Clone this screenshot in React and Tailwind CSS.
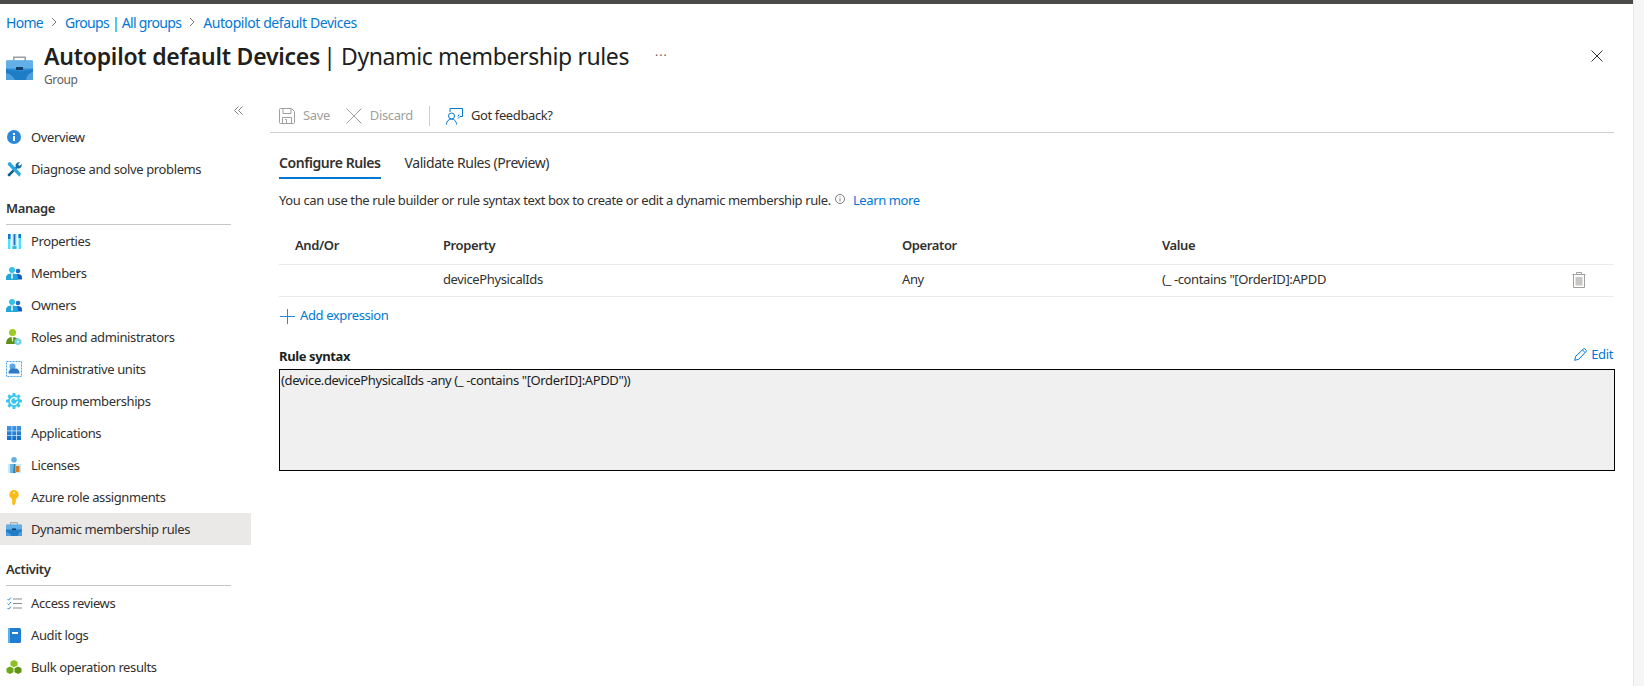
import React from 'react';

const Briefcase = ({ className }) => (
  <svg className={className} viewBox="0 0 27 24">
    <path d="M7 5V.5h13V5h-1.500V2H8.500v3z" fill="#9a9ea3" />
    <rect x="0" y="4.500" width="27" height="19.500" rx="1.500" fill="#2f8ed8" />
    <rect x="0" y="4.500" width="27" height="8" fill="#62b0e8" />
    <path d="M0 13c5 1.500 9 2 13.500 2s9-.5 13.500-2v9.500a1.500 1.500 0 0 1-1.500 1.500h-24A1.500 1.500 0 0 1 0 22.500z" fill="#1f7cc6" />
    <path d="M20 24c.5-4 3-7 7-8.500v7a1.500 1.500 0 0 1-1.500 1.500zM0 17c4 .5 7 3 9 7H1.500A1.500 1.500 0 0 1 0 22.500z" fill="#4f9fdd" />
    <rect x="10" y="11" width="7" height="3" fill="#143f66" />
  </svg>
);

const InfoIcon = () => (
  <svg className="w-[14px] h-[14px]" viewBox="0 0 14 14">
    <circle cx="7" cy="7" r="7" fill="#2b88d8" />
    <rect x="6" y="6" width="2" height="5" fill="#fff" />
    <rect x="6" y="3" width="2" height="2" fill="#fff" />
  </svg>
);

const WrenchIcon = () => (
  <svg className="w-[15px] h-[15px]" viewBox="0 0 15 15">
    <path d="M1 14l-.5-1.500L9 4.500 10.500 6 2.500 14.500z" fill="#0f5f8f" />
    <path d="M8.500 4a3.500 3.500 0 0 1 4.500-3.500L11 2.500l1.500 1.500 2-2A3.500 3.500 0 0 1 10.500 6.500z" fill="#0f6fa8" />
    <path d="M1.500.5L3 0l11 11.500-1.500 3.200L1.500 3.500.5 2z" fill="#2aa7dc" />
  </svg>
);

const PropertiesIcon = () => (
  <svg className="w-[13px] h-[15px]" viewBox="0 0 13 15">
    <rect x="0" y="0" width="2.500" height="15" fill="#50e0ff" />
    <rect x="0" y="0" width="2.500" height="5" fill="#0f78d4" />
    <rect x="4.500" y="0" width="4" height="15" fill="#9fdcf5" />
    <rect x="5.700" y="0" width="1.600" height="11" fill="#1f6fc0" />
    <rect x="4.500" y="12" width="4" height="3" fill="#32bedd" />
    <rect x="10.500" y="0" width="2.500" height="15" fill="#50e0ff" />
    <rect x="10.500" y="0" width="2.500" height="4" fill="#0f78d4" />
  </svg>
);

const PeopleIcon = () => (
  <svg className="w-[16px] h-[13px]" viewBox="0 0 16 13">
    <circle cx="12" cy="4" r="2.300" fill="#1f6fc5" />
    <path d="M9 12.500V9c0-1 1.200-2 3-2s4 1 4 3v2.500z" fill="#0f5fc0" />
    <circle cx="6" cy="3" r="3" fill="#33c1e8" />
    <path d="M0 13v-2.500C0 8 2.500 6.500 6 6.500s6 1.500 6 4V13z" fill="#22a5d8" />
    <path d="M4.700 6.600h2.600L6.600 8l.4 3-1 1-1-1 .4-3z" fill="#e6f7fc" />
  </svg>
);

const RolesIcon = () => (
  <svg className="w-[16px] h-[16px]" viewBox="0 0 16 16">
    <circle cx="6.500" cy="3.500" r="3.500" fill="#9ccb26" />
    <path d="M0 15c0-4.500 2.500-7 6.500-7s6.500 2.500 6.500 7z" fill="#5f8f1a" />
    <path d="M5.500 8h2L7 12l-.5 1-.5-1z" fill="#e3f2b8" />
    <path d="M12 9l3.500 2v3.500L12 16.500l-3.500-2V11z" fill="#72d5f2" />
    <circle cx="12" cy="12.700" r="1" fill="#e8f9fe" />
  </svg>
);

const AdminUnitsIcon = () => (
  <svg className="w-[16px] h-[16px]" viewBox="0 0 16 16">
    <rect x=".5" y=".5" width="15" height="15" fill="#f3f9fd" stroke="#4ba6ea" strokeDasharray="2 1" />
    <circle cx="6.500" cy="5.500" r="3" fill="#5aa5e6" />
    <path d="M2.500 12.500c0-3 1.500-5 4-5h3c2 0 4 1.500 4 5z" fill="#2f78c8" />
  </svg>
);

const GearIcon = () => (
  <svg className="w-[16px] h-[16px]" viewBox="0 0 16 16">
    <g fill="#36c6ee">
      <circle cx="8" cy="8" r="6" />
      <rect x="6.500" y="0" width="3" height="16" rx=".8" />
      <rect x="0" y="6.500" width="16" height="3" rx=".8" />
      <rect x="6.500" y="0" width="3" height="16" rx=".8" transform="rotate(45 8 8)" />
      <rect x="6.500" y="0" width="3" height="16" rx=".8" transform="rotate(-45 8 8)" />
    </g>
    <path d="M11.500 8a3.500 3.500 0 1 1-1.300-2.700" fill="none" stroke="#fff" strokeWidth="1.400" />
    <path d="M11.500 3.500v3.200H8.300z" fill="#fff" />
  </svg>
);

const AppsIcon = () => (
  <svg className="w-[14px] h-[14px]" viewBox="0 0 14 14">
    <defs>
      <linearGradient id="apps" x1="0" y1="0" x2="0" y2="1">
        <stop offset="0" stopColor="#3f96e6" />
        <stop offset="1" stopColor="#0f6cc8" />
      </linearGradient>
    </defs>
    <rect x="0" y="0" width="14" height="14" fill="url(#apps)" />
    <path d="M4.500 0h.8v14h-.8zM9 0h.8v14H9zM0 4.500h14v.8H0zM0 9h14v.8H0z" fill="#cfe6f8" />
  </svg>
);

const LicenseIcon = () => (
  <svg className="w-[13px] h-[16px]" viewBox="0 0 13 16">
    <circle cx="6" cy="2.800" r="2.800" fill="#5fb0e0" />
    <path d="M0 7h13v9H0z" fill="#cde9f6" />
    <path d="M2 7h5v9H2z" fill="#6cb8e0" />
    <path d="M6 7l1.500 0V16H5z" fill="#2a7fbd" />
    <rect x="8" y="9" width="3.500" height="6" fill="#d87a1e" />
  </svg>
);

const KeyIcon = () => (
  <svg className="w-[10px] h-[15px]" viewBox="0 0 10 15">
    <path d="M5 0a4.800 4.800 0 0 1 1.800 9.200V12L5.500 15H4l-.8-1.500v-4.300A4.800 4.800 0 0 1 5 0z" fill="#fbbc15" />
    <circle cx="5" cy="2.700" r="1" fill="#fff3c4" />
  </svg>
);

const ChecklistIcon = () => (
  <svg className="w-[15px] h-[13px]" viewBox="0 0 15 13" fill="none">
    <path d="M.5 2l1.200 1.200L4 .5M.5 6.500l1.200 1.200L4 5M.5 11l1.200 1.200L4 9.500" stroke="#2b88d8" />
    <path d="M6 2h9M6 6.500h9M6 11h9" stroke="#8c8c8c" />
  </svg>
);

const BookIcon = () => (
  <svg className="w-[13px] h-[15px]" viewBox="0 0 13 15">
    <rect x="0" y="0" width="13" height="15" rx="1.500" fill="#1f7ed0" />
    <rect x="0" y="0" width="2" height="15" fill="#5eb0ea" />
    <rect x="4" y="4" width="6" height="2" fill="#fff" />
  </svg>
);

const BulkIcon = () => (
  <svg className="w-[16px] h-[14px]" viewBox="0 0 16 14">
    <path d="M8 0l3.500 1.800v3.700L8 7.300 4.500 5.500V1.800z" fill="#8cc11f" />
    <path d="M4 6.500l3.500 1.800v3.900L4 14 .5 12.200V8.300z" fill="#6ea615" />
    <path d="M12 6.500l3.500 1.800v3.900L12 14l-3.500-1.800V8.300z" fill="#5e9410" />
  </svg>
);

const navTop = [
  { label: 'Overview', icon: <InfoIcon /> },
  { label: 'Diagnose and solve problems', icon: <WrenchIcon /> },
];

const navManage = [
  { label: 'Properties', icon: <PropertiesIcon /> },
  { label: 'Members', icon: <PeopleIcon /> },
  { label: 'Owners', icon: <PeopleIcon /> },
  { label: 'Roles and administrators', icon: <RolesIcon /> },
  { label: 'Administrative units', icon: <AdminUnitsIcon /> },
  { label: 'Group memberships', icon: <GearIcon /> },
  { label: 'Applications', icon: <AppsIcon /> },
  { label: 'Licenses', icon: <LicenseIcon /> },
  { label: 'Azure role assignments', icon: <KeyIcon /> },
  { label: 'Dynamic membership rules', icon: <Briefcase className="w-[16px] h-[14px]" />, active: true },
];

const navActivity = [
  { label: 'Access reviews', icon: <ChecklistIcon /> },
  { label: 'Audit logs', icon: <BookIcon /> },
  { label: 'Bulk operation results', icon: <BulkIcon /> },
];

const NavItem = ({ item }) => (
  <div className={`flex items-center h-8 pl-[6px] ${item.active ? 'bg-[#ebe9e8]' : ''}`}>
    <span className="w-[16px] flex justify-center shrink-0">{item.icon}</span>
    <span className="ml-[9px] pt-[1px] text-[#323130]">{item.label}</span>
  </div>
);

const NavHeader = ({ label, className }) => (
  <div className="pl-[6px]">
    <div className={`w-[225px] border-b border-[#c8c6c4] font-semibold text-[#323130] leading-[18px] ${className}`}>
      {label}
    </div>
  </div>
);

const Chevron = () => (
  <svg className="w-[8px] h-[10px]" viewBox="0 0 8 10" fill="none" stroke="#797775"><path d="M2 1l4 4-4 4" /></svg>
);

const App = () => {
  return (
    <div
      className="flex w-full h-[686px] overflow-hidden bg-white text-[13px] tracking-[-0.38px]"
      style={{ fontFamily: '"Noto Sans", sans-serif' }}
    >
      <div className="w-[1633px] shrink-0 flex flex-col">
        <div className="h-[4px] bg-[#4a4a48]" />

        <div className="h-[36px] pl-[6px] flex items-center gap-[7px] text-[14px] tracking-[-0.42px] text-[#0078d4]">
          <span className="tracking-[-0.7px]">Home</span>
          <Chevron />
          <span className="tracking-[-0.7px]">Groups | All groups</span>
          <Chevron />
          <span>Autopilot default Devices</span>
        </div>

        <div className="h-[60px] flex pl-[6px] pr-[30px]">
          <Briefcase className="w-[27px] h-[24px] mt-[16px]" />
          <div className="ml-[11px]">
            <div className="flex items-center h-[32px] text-[23px] text-[#201f1e]">
              <span className="font-semibold tracking-[-0.24px]">Autopilot default Devices</span>
              <span className="ml-[3px] tracking-[-0.4px]">| Dynamic membership rules</span>
              <span className="ml-[26px] text-[#605e5c] text-[12px] tracking-[1px]">···</span>
            </div>
            <div className="text-[12px] text-[#605e5c] leading-[16px]">Group</div>
          </div>
          <svg className="ml-auto mt-[10px] w-[12px] h-[12px]" viewBox="0 0 12 12" stroke="#323130" fill="none">
            <path d="M.5.5l11 11M11.500.5l-11 11" />
          </svg>
        </div>

        <div className="flex flex-1 min-h-0">
          <div className="w-[251px] shrink-0">
            <div className="h-[21px] pr-[8px] flex justify-end items-center">
              <svg className="w-[9px] h-[9px]" viewBox="0 0 9 9" fill="none" stroke="#605e5c" strokeWidth=".8">
                <path d="M4.500.5L.5 4.500l4 4M8.500.5l-4 4 4 4" />
              </svg>
            </div>
            {navTop.map((item) => <NavItem key={item.label} item={item} />)}
            <NavHeader label="Manage" className="h-[40px] pt-[14px]" />
            {navManage.map((item) => <NavItem key={item.label} item={item} />)}
            <NavHeader label="Activity" className="h-[41px] pt-[15px]" />
            <div className="mt-[1px]">
              {navActivity.map((item) => <NavItem key={item.label} item={item} />)}
            </div>
          </div>

          <div className="ml-[19px] w-[1344px] text-[#323130]">
            <div className="h-[32px] border-b border-[#d2d0ce] flex items-center pl-[9px] box-content">
              <svg className="w-[16px] h-[16px]" viewBox="0 0 16 16" fill="none" stroke="#a19f9d">
                <path d="M1.500.5h11l3 3v11a1 1 0 0 1-1 1h-13a1 1 0 0 1-1-1v-13a1 1 0 0 1 1-1zM4 .5v5h8v-5M3.500 15.500v-6h9v6M6 11.500h1.500v4" />
              </svg>
              <span className="ml-[8px] text-[#a19f9d]">Save</span>
              <svg className="ml-[16px] w-[16px] h-[16px]" viewBox="0 0 16 16" fill="none" stroke="#a19f9d">
                <path d="M.5.5l15 15M15.500.5l-15 15" />
              </svg>
              <span className="ml-[8px] text-[#a19f9d]">Discard</span>
              <div className="ml-[16px] w-px h-[20px] bg-[#d2d0ce]" />
              <svg className="ml-[16px] w-[17px] h-[17px]" viewBox="0 0 17 17" fill="none" stroke="#0078d4">
                <path d="M4 4V.5h12.500v8H14L12 10.500M12 8.500l1-2" />
                <circle cx="5.500" cy="8" r="3" />
                <path d="M.5 16.500c0-3 2-5.500 5-5.500s5 2.500 5 5.500" />
              </svg>
              <span className="ml-[8px]">Got feedback?</span>
            </div>

            <div className="pl-[9px]">
              <div className="flex gap-[24px] mt-[19px] h-[27px] text-[14px] tracking-[-0.43px]">
                <div className="font-semibold border-b-2 border-[#0078d4] h-[27px] -mb-[1px]">Configure Rules</div>
                <div>Validate Rules (Preview)</div>
              </div>

              <div className="flex items-center mt-[13px] h-[18px]">
                <span>You can use the rule builder or rule syntax text box to create or edit a dynamic membership rule.</span>
                <svg className="ml-[4px] -mt-[4px] w-[10px] h-[10px]" viewBox="0 0 10 10" fill="none" stroke="#605e5c" strokeWidth=".8">
                  <circle cx="5" cy="5" r="4.500" />
                  <path d="M5 4.500v3M5 2.500v1" />
                </svg>
                <span className="ml-[8px] text-[#0078d4]">Learn more</span>
              </div>

              <div className="mt-[19px] w-[1335px]">
                <div className="grid grid-cols-[164px_459px_260px_1fr] h-[36px] pb-[2px] items-center font-semibold border-b border-[#edebe9]">
                  <div className="pl-[16px]">And/Or</div>
                  <div>Property</div>
                  <div>Operator</div>
                  <div>Value</div>
                </div>
                <div className="grid grid-cols-[164px_459px_260px_1fr] h-[32px] pb-[2px] items-center border-b border-[#edebe9]">
                  <div />
                  <div>devicePhysicalIds</div>
                  <div>Any</div>
                  <div className="flex items-center justify-between pr-[28px]">
                    <span>(_ -contains "[OrderID]:APDD</span>
                    <svg className="w-[14px] h-[16px]" viewBox="0 0 14 16">
                      <path d="M4.500 2V.5h5V2M.5 2.500h13M1.500 2.500v13h11v-13" fill="none" stroke="#a19f9d" />
                      <rect x="3.500" y="5" width="7" height="8.500" fill="#c8c6c4" />
                    </svg>
                  </div>
                </div>
              </div>

              <div className="flex items-center h-[20px] mt-[9px] text-[#0078d4]">
                <svg className="ml-[1px] w-[15px] h-[15px]" viewBox="0 0 15 15" fill="none" stroke="#2b88d8">
                  <path d="M7.500 0v15M0 7.500h15" />
                </svg>
                <span className="ml-[5px]">Add expression</span>
              </div>

              <div className="flex items-end justify-between w-[1334px] h-[26px] mt-[14px] mb-[3px]">
                <span className="font-bold text-[#201f1e] leading-[18px] mb-[1px]">Rule syntax</span>
                <span className="flex items-center text-[#0078d4] mb-[2px]">
                  <svg className="w-[13px] h-[13px]" viewBox="0 0 13 13" fill="none" stroke="#0078d4">
                    <path d="M.7 12.300l1-4L9.500.9a1 1 0 0 1 1.400 0l1.200 1.200a1 1 0 0 1 0 1.400L4.700 11.300zM8.500 2l2.500 2.500" />
                  </svg>
                  <span className="ml-[4px]">Edit</span>
                </span>
              </div>

              <div className="w-[1336px] h-[102px] border border-black bg-[#f0f0f0] pl-[1px] pt-[1px] text-[#201f1e]">
                (device.devicePhysicalIds -any (_ -contains "[OrderID]:APDD"))
              </div>
            </div>
          </div>
        </div>
      </div>
      <div className="flex-1 bg-[#f6f6f6] border-l border-[#e8e8e8]" />
    </div>
  );
};

export default App;
